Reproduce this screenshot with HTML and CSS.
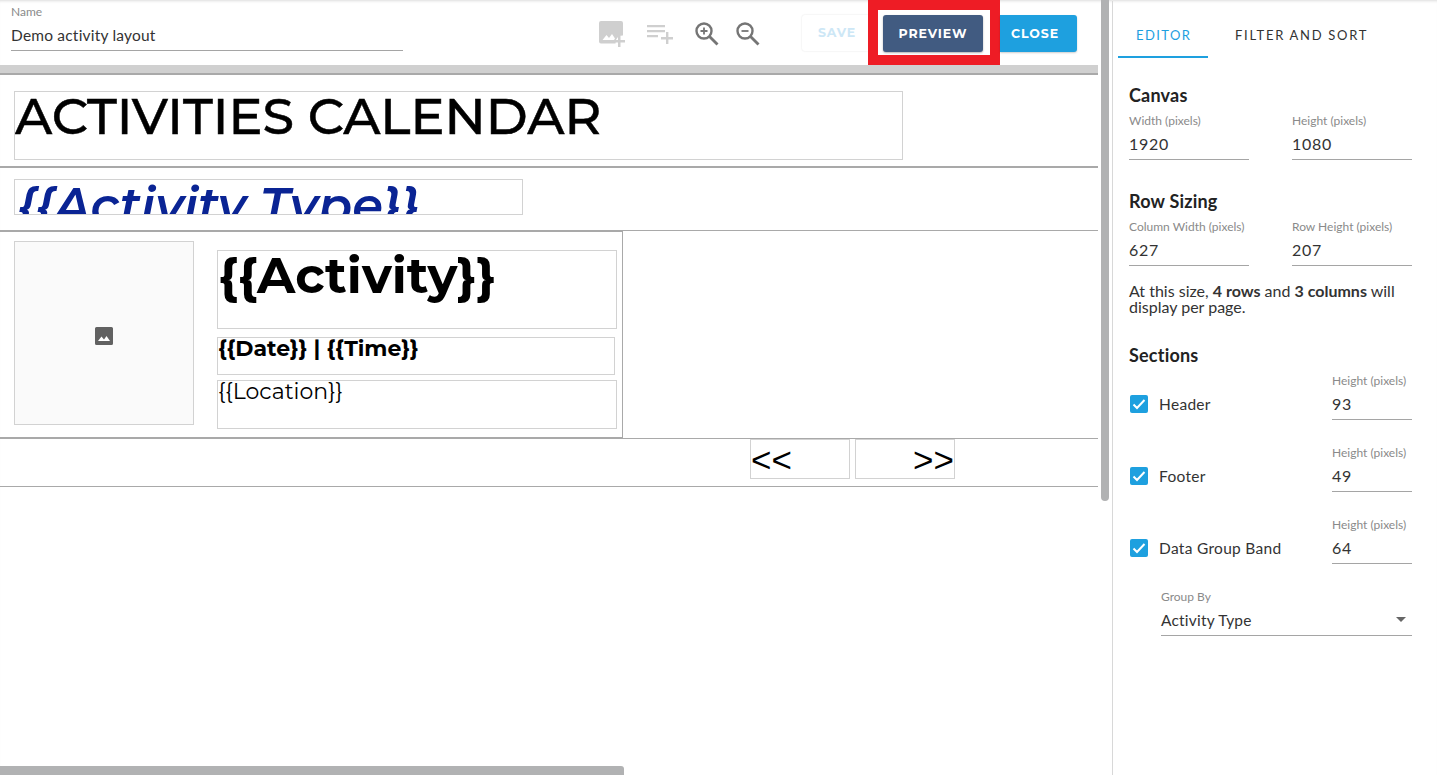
FILE: index.html
```html
<!DOCTYPE html>
<html lang="en">
<head>
    <meta charset="UTF-8">
    <title>Demo activity layout</title>
    <link rel="stylesheet" href="styles.css">
</head>
<body>
<div class="app">
    <div class="main">
        <div class="toolbar">
            <div class="field name-field">
                <label class="field-label">Name</label>
                <div class="field-value">Demo activity layout</div>
            </div>
            <div class="tools">
                <svg class="tool tool-image" viewBox="0 0 28 28" width="28" height="28">
                    <path fill="#cfcfcf" d="M3 1h20a2 2 0 0 1 2 2v12.500a7 7 0 0 0-7.500 8H3a2 2 0 0 1-2-2V3a2 2 0 0 1 2-2z"/>
                    <path fill="#fff" d="M4.500 20l4-5 2.500 3 3-4 3 4.500-1 1.500z"/>
                    <path fill="#cfcfcf" d="M20 16h2.500v4H27v2.500h-4.500V27H20v-4.500h-4V20h4z"/>
                </svg>
                <svg class="tool tool-list" viewBox="0 0 28 28" width="28" height="28">
                    <path fill="#cfcfcf" d="M1 4h18v2.200H1zM1 9h18v2.200H1zM1 14h11v2.200H1zM20 11h2.400v5H27v2.400h-4.600V23H20v-4.600h-5V16h5z"/>
                </svg>
                <svg class="tool tool-zoom" viewBox="0 0 26 26" width="26" height="26">
                    <circle cx="10" cy="10" r="7.500" fill="none" stroke="#757575" stroke-width="2.400"/>
                    <path stroke="#757575" stroke-width="2.800" d="M15.500 15.500l8 8"/>
                    <path stroke="#757575" stroke-width="1.800" d="M6.500 10h7M10 6.500v7"/>
                </svg>
                <svg class="tool tool-zoom-out" viewBox="0 0 26 26" width="26" height="26">
                    <circle cx="10" cy="10" r="7.500" fill="none" stroke="#757575" stroke-width="2.400"/>
                    <path stroke="#757575" stroke-width="2.800" d="M15.500 15.500l8 8"/>
                    <path stroke="#757575" stroke-width="1.800" d="M6.500 10h7"/>
                </svg>
            </div>
            <div class="actions">
                <button class="btn btn-save">SAVE</button>
                <span class="highlight"><button class="btn btn-preview">PREVIEW</button></span>
                <button class="btn btn-close">CLOSE</button>
            </div>
        </div>
        <div class="canvas-wrap">
            <div class="band-top"></div>
            <div class="section section-header">
                <div class="item item-title">ACTIVITIES CALENDAR</div>
            </div>
            <div class="section section-group">
                <div class="item item-type">{{Activity Type}}</div>
            </div>
            <div class="section section-row">
                <div class="item item-image">
                    <svg viewBox="0 0 18 18" width="18" height="18">
                        <path fill="#616161" d="M1.500 0h15A1.500 1.500 0 0 1 18 1.500v15a1.500 1.500 0 0 1-1.500 1.500h-15A1.500 1.500 0 0 1 0 16.500v-15A1.500 1.500 0 0 1 1.500 0z"/>
                        <path fill="#fff" d="M3 14l3.500-4.500 2.500 3 2.500-3.500 3.500 5z"/>
                    </svg>
                </div>
                <div class="item item-activity">{{Activity}}</div>
                <div class="item item-date">{{Date}} | {{Time}}</div>
                <div class="item item-location">{{Location}}</div>
            </div>
            <div class="section section-footer">
                <div class="item item-prev">&lt;&lt;</div>
                <div class="item item-next">&gt;&gt;</div>
            </div>
            <div class="hscroll"></div>
        </div>
    </div>
    <div class="vscroll-track"><div class="vscroll"></div></div>
    <div class="panel">
        <div class="tabs">
            <div class="tab tab-active">EDITOR</div>
            <div class="tab">FILTER AND SORT</div>
        </div>
        <div class="panel-body">
            <h3 class="heading">Canvas</h3>
            <div class="two-col">
                <div class="field"><label class="field-label">Width (pixels)</label><div class="field-value num">1920</div></div>
                <div class="field"><label class="field-label">Height (pixels)</label><div class="field-value num">1080</div></div>
            </div>
            <h3 class="heading heading-row">Row Sizing</h3>
            <div class="two-col">
                <div class="field"><label class="field-label">Column Width (pixels)</label><div class="field-value num">627</div></div>
                <div class="field"><label class="field-label">Row Height (pixels)</label><div class="field-value num">207</div></div>
            </div>
            <p class="hint">At this size, <b>4 rows</b> and <b>3 columns</b> will display per page.</p>
            <h3 class="heading heading-sections">Sections</h3>
            <div class="section-opt">
                <span class="check"><svg viewBox="0 0 18 18" width="18" height="18"><path fill="none" stroke="#fff" stroke-width="2" d="M3.500 9.500l3.500 3.500 7.500-8"/></svg></span>
                <span class="opt-label">Header</span>
                <div class="field opt-field"><label class="field-label">Height (pixels)</label><div class="field-value num">93</div></div>
            </div>
            <div class="section-opt">
                <span class="check"><svg viewBox="0 0 18 18" width="18" height="18"><path fill="none" stroke="#fff" stroke-width="2" d="M3.500 9.500l3.500 3.500 7.500-8"/></svg></span>
                <span class="opt-label">Footer</span>
                <div class="field opt-field"><label class="field-label">Height (pixels)</label><div class="field-value num">49</div></div>
            </div>
            <div class="section-opt">
                <span class="check"><svg viewBox="0 0 18 18" width="18" height="18"><path fill="none" stroke="#fff" stroke-width="2" d="M3.500 9.500l3.500 3.500 7.500-8"/></svg></span>
                <span class="opt-label">Data Group Band</span>
                <div class="field opt-field"><label class="field-label">Height (pixels)</label><div class="field-value num">64</div></div>
            </div>
            <div class="field group-by">
                <label class="field-label">Group By</label>
                <div class="field-value select-value">Activity Type<span class="arrow"></span></div>
            </div>
        </div>
    </div>
</div>
</body>
</html>
```

FILE: styles.css
```css
* {
    box-sizing: border-box;
}

html, body {
    margin: 0;
    height: 100%;
    overflow: hidden;
}

body {
    font-family: "Lato", "Liberation Sans", sans-serif;
    color: #333;
    background: #fff;
}

.app {
    display: flex;
    height: 775px;
    padding-top: 1px;
    box-shadow: inset 0 3px 3px -2px rgba(0, 0, 0, 0.14);
}

.main {
    width: 1098px;
    display: flex;
    flex-direction: column;
}

.toolbar {
    height: 64px;
    display: flex;
    align-items: flex-start;
    padding-left: 11px;
}

.field-label {
    display: block;
    font-size: 12px;
    line-height: 14px;
    color: #8a8a8a;
}

.field-value {
    font-size: 15.500px;
    line-height: 20px;
    letter-spacing: 0.2px;
    color: #333;
    border-bottom: 1px solid #a5a5a5;
    padding: 6px 0 5px;
}

.num {
    font-size: 16px;
    letter-spacing: 0.700px;
}

.name-field {
    width: 392px;
    padding-top: 4px;
}

.tools {
    margin-left: 195px;
    width: 180px;
    height: 64px;
    display: flex;
    align-items: flex-start;
}

.tool {
    flex: none;
}

.tool-image {
    margin-top: 19px;
}

.tool-list {
    margin-top: 20px;
    margin-left: 20px;
}

.tool-zoom {
    margin-top: 20px;
    margin-left: 20px;
}

.tool-zoom-out {
    margin-top: 20px;
    margin-left: 15px;
}

.actions {
    display: flex;
    align-items: flex-start;
    margin-left: 24px;
    margin-top: 14px;
}

.btn {
    height: 36px;
    border: 0;
    border-radius: 3px;
    font-family: "Montserrat", "Inter", sans-serif;
    font-size: 12.500px;
    font-weight: 700;
    letter-spacing: 0.900px;
    color: #fff;
    padding: 0 0 1px;
}

.btn-save {
    width: 66px;
    padding-left: 4px;
    background: #fff;
    color: #cde7f6;
    box-shadow: 0 0 2px rgba(0, 0, 0, 0.12);
    border-radius: 3px 0 0 3px;
}

.highlight {
    display: block;
    margin-top: -15px;
    border: 10px solid #ee1c25;
    padding: 5px;
    background: #fff;
    height: 65px;
    width: 132px;
}

.btn-preview {
    display: block;
    width: 100px;
    height: 37px;
    background: #415b81;
    box-shadow: 0 1px 2px rgba(0, 0, 0, 0.3);
}

.btn-close {
    width: 77px;
    height: 37px;
    padding-right: 7px;
    background: #1ea0df;
    box-shadow: 0 1px 2px rgba(0, 0, 0, 0.2);
    border-radius: 0 3px 3px 0;
}

.canvas-wrap {
    flex: 1;
    position: relative;
    overflow: hidden;
}

.band-top {
    height: 10px;
    background: #d0d0d0;
    border-bottom: 2px solid #a9a9a9;
}

.section {
    position: relative;
    border-bottom: 1px solid #a9a9a9;
}

.section-header {
    height: 93px;
    border-bottom-width: 2px;
}

.section-group {
    height: 63px;
}

.section-row {
    width: 623px;
    height: 208px;
    border-top: 1px solid #a9a9a9;
    border-right: 1px solid #a9a9a9;
    border-bottom-width: 2px;
}

.section-row::after {
    content: "";
    position: absolute;
    left: 622px;
    width: 476px;
    bottom: -2px;
    border-bottom: 1px solid #a9a9a9;
}

.section-footer {
    height: 48px;
}

.item {
    position: absolute;
    border: 1px solid #d2d2d2;
    font-family: "Montserrat", "Inter", sans-serif;
    color: #000;
    overflow: hidden;
    white-space: nowrap;
}

.item-title {
    left: 14px;
    top: 16px;
    width: 889px;
    height: 69px;
    font-size: 50.800px;
    line-height: 48px;
    font-weight: 500;
    -webkit-text-stroke: 0.500px #000;
}

.item-type {
    left: 14px;
    top: 11px;
    width: 509px;
    height: 36px;
    font-size: 49.500px;
    line-height: 50px;
    font-weight: 600;
    font-style: italic;
    color: #0a2494;
    padding-left: 2px;
}

.item-image {
    left: 14px;
    top: 9px;
    width: 180px;
    height: 184px;
    background: #fafafa;
    padding-top: 6px;
    display: flex;
    align-items: center;
    justify-content: center;
}

.item-activity {
    left: 217px;
    top: 18px;
    width: 400px;
    height: 79px;
    font-size: 50px;
    line-height: 50px;
    font-weight: 700;
}

.item-date {
    left: 217px;
    top: 105px;
    width: 398px;
    height: 38px;
    font-size: 22px;
    line-height: 22px;
    font-weight: 700;
}

.item-location {
    left: 217px;
    top: 148px;
    width: 400px;
    height: 49px;
    font-size: 22px;
    line-height: 22px;
    font-weight: 400;
}

.item-prev,
.item-next {
    top: 0;
    width: 100px;
    height: 40px;
    font-family: "Liberation Sans", sans-serif;
    font-size: 35px;
    line-height: 40px;
}

.item-prev {
    left: 750px;
}

.item-next {
    left: 855px;
    text-align: right;
}

.hscroll {
    position: absolute;
    left: 0;
    bottom: 0;
    width: 624px;
    height: 9px;
    background: #b1b2b3;
    border-radius: 0 3px 0 0;
}

.vscroll-track {
    width: 14px;
    padding-left: 3px;
    margin-top: -1px;
}

.vscroll {
    width: 8px;
    height: 501px;
    background: #b1b2b3;
    border-radius: 0 0 4px 4px;
}

.panel {
    width: 325px;
    border-left: 1px solid #d8d8d8;
    padding-left: 5px;
}

.tabs {
    display: flex;
    height: 57px;
}

.tab {
    height: 57px;
    padding-top: 26px;
    font-size: 13px;
    line-height: 17px;
    letter-spacing: 1.700px;
    color: #333;
    padding-left: 27px;
}

.tab-active {
    width: 90px;
    padding-left: 18px;
    letter-spacing: 1.400px;
    color: #1ea0df;
    border-bottom: 2px solid #1ea0df;
}

.panel-body {
    padding: 0 25px 0 11px;
}

.heading {
    margin: 0;
    font-size: 18px;
    line-height: 22px;
    font-weight: 700;
    letter-spacing: 0.2px;
    color: #222;
}

.panel-body > .heading:first-child {
    margin-top: 26px;
}

.heading-row {
    margin-top: 30px;
}

.heading-sections {
    margin-top: 29px;
}

.two-col {
    display: grid;
    grid-template-columns: 120px 120px;
    column-gap: 43px;
    margin-top: 8px;
}

.hint {
    margin: 17px 0 0;
    font-size: 16px;
    line-height: 16px;
    color: #333;
    width: 283px;
}

.section-opt {
    display: flex;
    align-items: flex-end;
    height: 72px;
}

.heading-sections + .section-opt {
    height: 54px;
}

.check {
    width: 18px;
    height: 18px;
    margin-left: 1px;
    margin-bottom: 7px;
    border-radius: 2px;
    background: #1ea0df;
}

.check svg {
    display: block;
}

.opt-label {
    margin-left: 11px;
    width: 173px;
    font-size: 15.500px;
    line-height: 20px;
    letter-spacing: 0.3px;
    margin-bottom: 6px;
}

.opt-field {
    width: 80px;
}

.group-by {
    margin-top: 26px;
    margin-left: 32px;
    width: 251px;
}

.select-value {
    position: relative;
}

.arrow {
    position: absolute;
    right: 6px;
    top: 13px;
    border-left: 5px solid transparent;
    border-right: 5px solid transparent;
    border-top: 5px solid #666;
}
```
